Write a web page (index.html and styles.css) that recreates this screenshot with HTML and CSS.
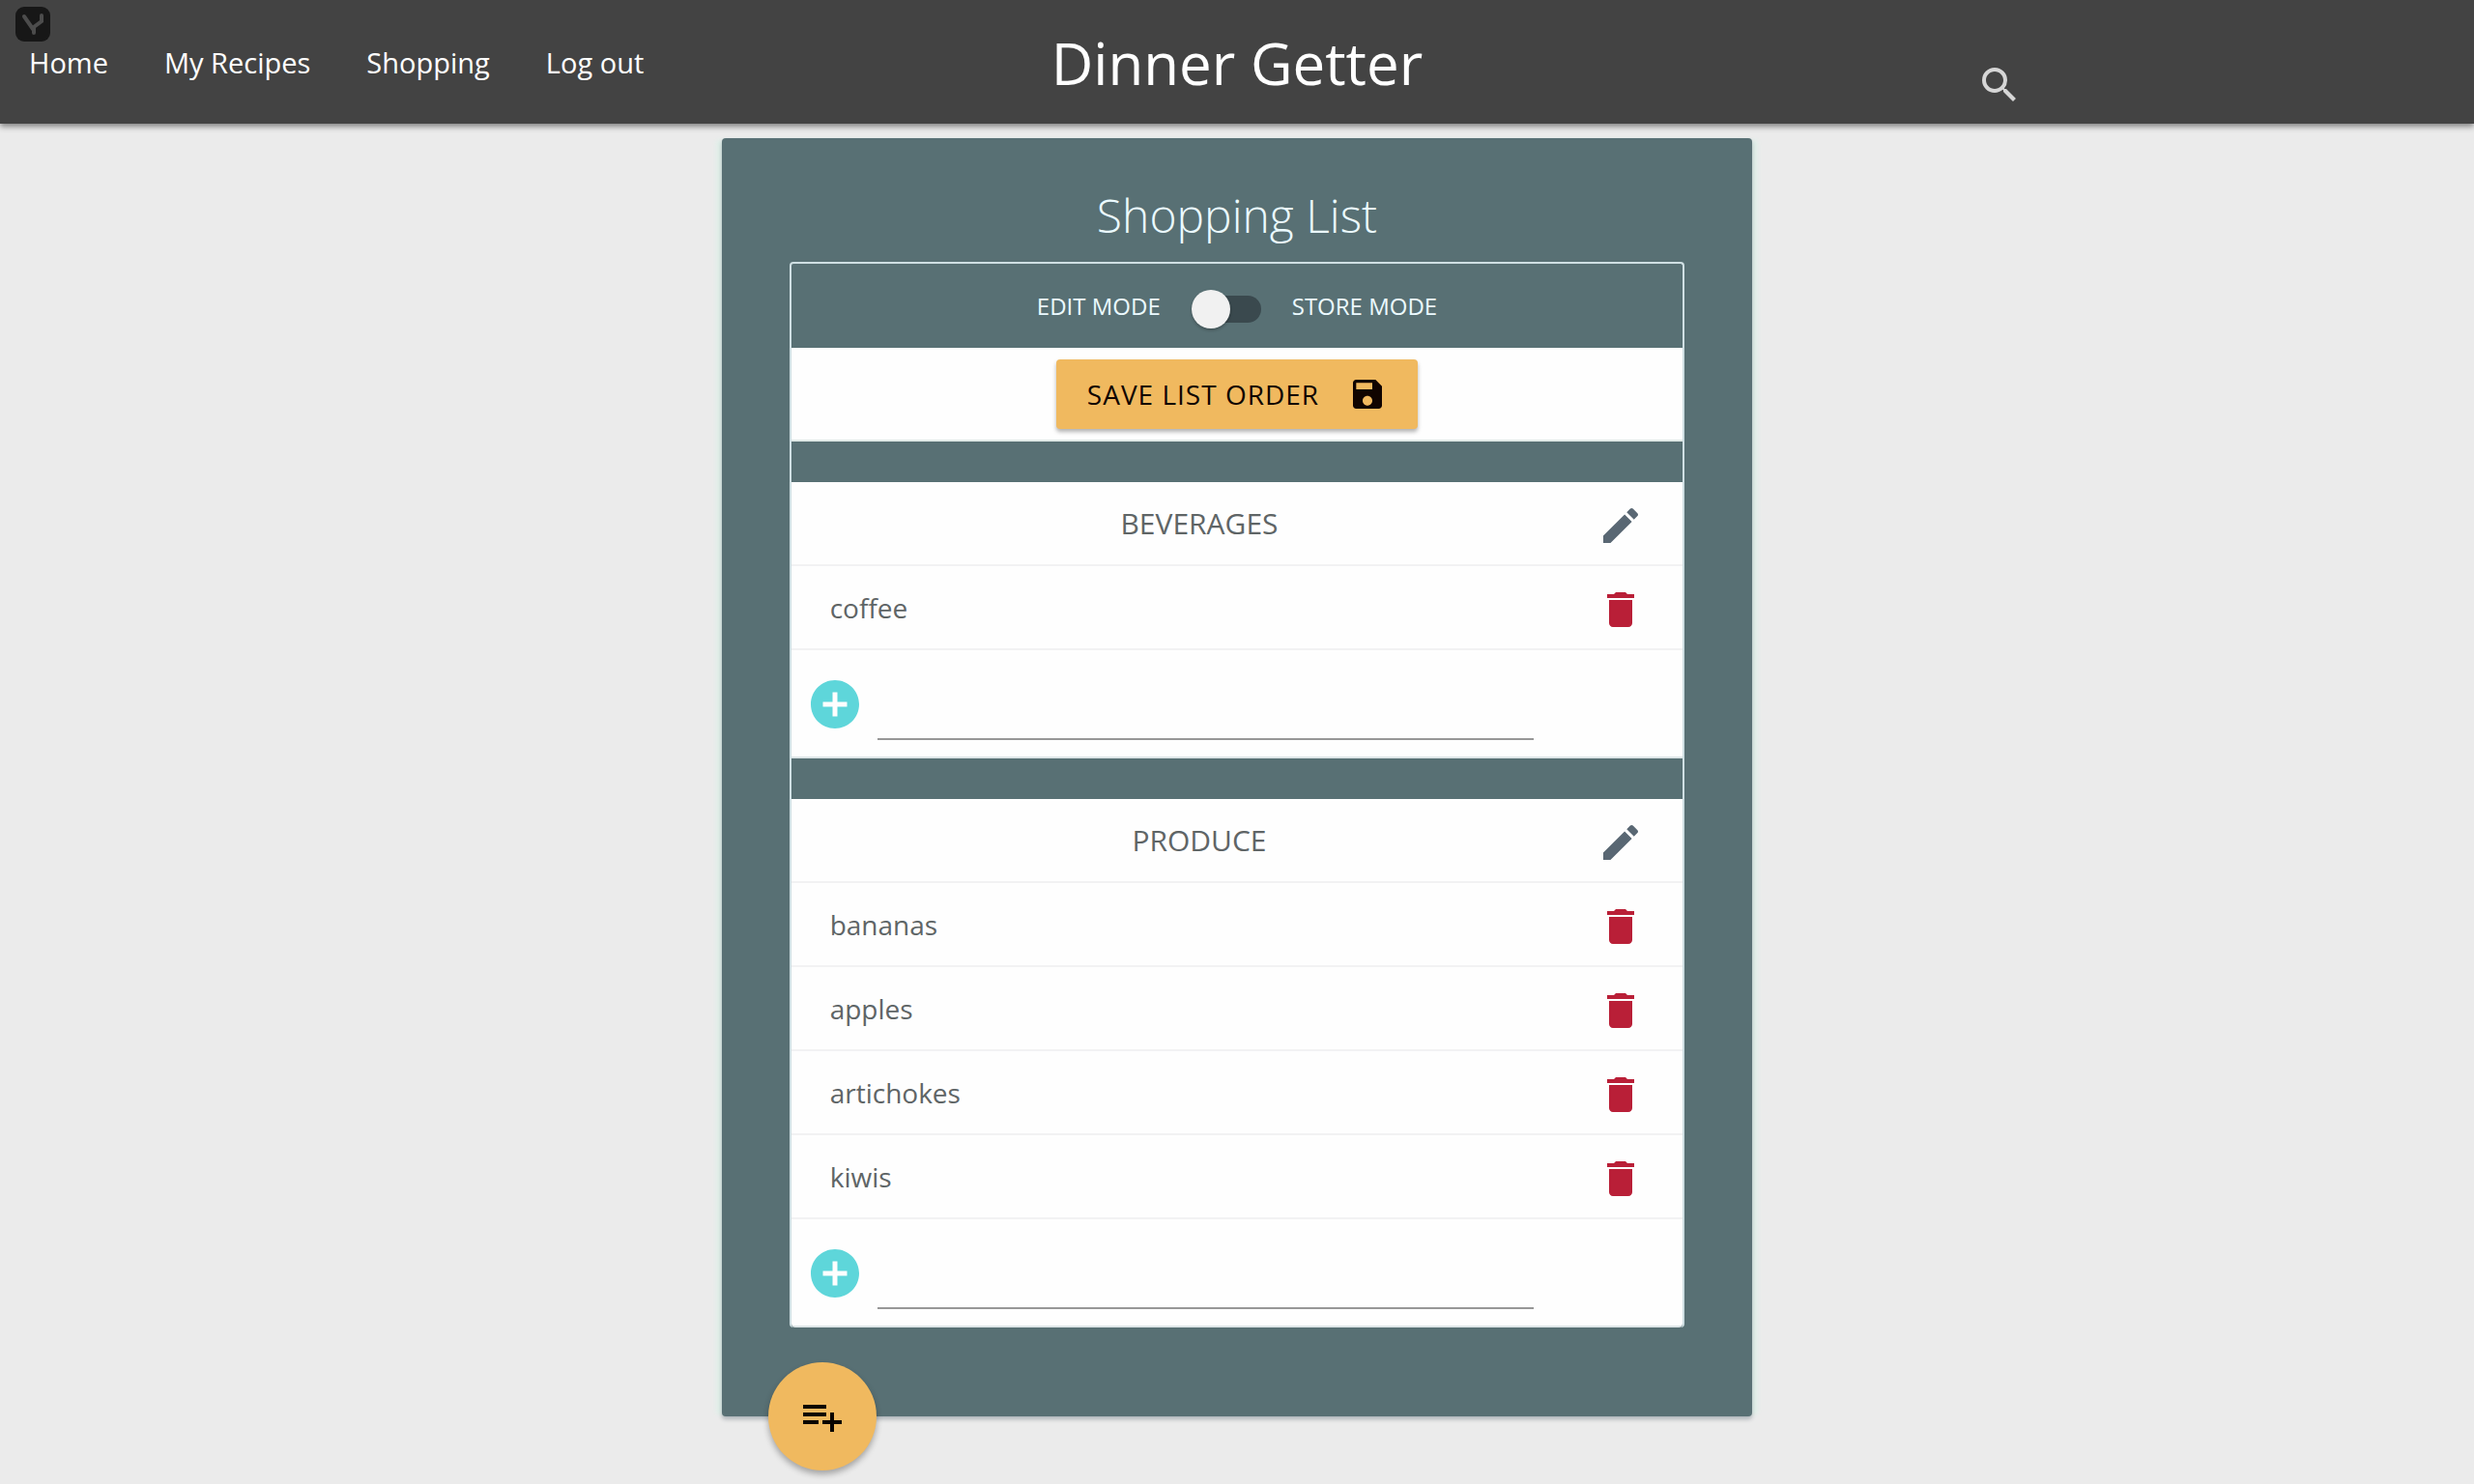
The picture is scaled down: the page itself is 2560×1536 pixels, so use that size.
FILE: index.html
```html
<!DOCTYPE html>
<html lang="en">
<head>
<meta charset="utf-8">
<meta name="viewport" content="width=device-width, initial-scale=1">
<title>Dinner Getter</title>
<link rel="stylesheet" href="styles.css">
</head>
<body>
<svg class="sprite" aria-hidden="true">
  <symbol id="edit" viewBox="0 0 24 24"><path d="M3 17.25V21h3.75L17.81 9.94l-3.75-3.75L3 17.25zM20.71 7.04c.39-.39.39-1.02 0-1.41l-2.34-2.34c-.39-.39-1.02-.39-1.41 0l-1.83 1.83 3.75 3.75 1.83-1.83z"/></symbol>
  <symbol id="delete" viewBox="0 0 24 24"><path d="M6 19c0 1.1.9 2 2 2h8c1.1 0 2-.9 2-2V7H6v12zM19 4h-3.5l-1-1h-5l-1 1H5v2h14V4z"/></symbol>
  <symbol id="add" viewBox="0 0 24 24"><path d="M12 2C6.48 2 2 6.48 2 12s4.480 10 10 10 10-4.480 10-10S17.520 2 12 2zm5 11h-4v4h-2v-4H7v-2h4V7h2v4h4v2z"/></symbol>
</svg>

<header class="topbar">
  <nav class="nav">
    <a href="#">Home</a>
    <a href="#">My Recipes</a>
    <a href="#">Shopping</a>
    <a href="#">Log out</a>
  </nav>
  <h1 class="brand">Dinner Getter</h1>
  <button class="icon-btn search" aria-label="Search">
    <svg viewBox="0 0 24 24"><path d="M15.5 14h-.79l-.28-.27A6.471 6.471 0 0 0 16 9.500 6.500 6.500 0 1 0 9.500 16c1.610 0 3.090-.59 4.230-1.570l.27.28v.79l5 4.990L20.490 19l-4.990-5zm-6 0C7.010 14 5 11.990 5 9.500S7.010 5 9.500 5 14 7.010 14 9.500 11.990 14 9.500 14z"/></svg>
  </button>
  <svg class="badge" viewBox="0 0 36 36" aria-hidden="true">
    <rect width="36" height="36" rx="9" fill="#171717"/>
    <path d="M9 10l9 13M27 9v6l-8 6v6" fill="none" stroke="#4c4c4c" stroke-width="4" stroke-linecap="round"/>
  </svg>
</header>

<main class="card">
  <h2 class="title">Shopping List</h2>
  <div class="collection">
    <div class="row mode">
      <span>EDIT MODE</span>
      <input class="switch" type="checkbox" role="switch" aria-label="Store mode">
      <span>STORE MODE</span>
    </div>
    <div class="row save">
      <button class="save-btn">SAVE LIST ORDER
        <svg viewBox="0 0 24 24"><path d="M17 3H5c-1.110 0-2 .9-2 2v14c0 1.100.89 2 2 2h14c1.100 0 2-.9 2-2V7l-4-4zm-5 16c-1.660 0-3-1.340-3-3s1.340-3 3-3 3 1.340 3 3-1.340 3-3 3zm3-10H5V5h10v4z"/></svg>
      </button>
    </div>
    <section class="group">
      <div class="row">
        <h3 class="heading">BEVERAGES</h3>
        <button class="icon-btn edit" aria-label="Edit beverages"><svg><use href="#edit"/></svg></button>
      </div>
      <ul class="items">
        <li class="row"><span class="name">coffee</span><button class="icon-btn delete" aria-label="Delete coffee"><svg><use href="#delete"/></svg></button></li>
      </ul>
      <form class="row add-row">
        <button class="icon-btn add" type="button" aria-label="Add to beverages"><svg><use href="#add"/></svg></button>
        <input class="field" type="text" aria-label="New beverage">
      </form>
    </section>
    <section class="group">
      <div class="row">
        <h3 class="heading">PRODUCE</h3>
        <button class="icon-btn edit" aria-label="Edit produce"><svg><use href="#edit"/></svg></button>
      </div>
      <ul class="items">
        <li class="row"><span class="name">bananas</span><button class="icon-btn delete" aria-label="Delete bananas"><svg><use href="#delete"/></svg></button></li>
        <li class="row"><span class="name">apples</span><button class="icon-btn delete" aria-label="Delete apples"><svg><use href="#delete"/></svg></button></li>
        <li class="row"><span class="name">artichokes</span><button class="icon-btn delete" aria-label="Delete artichokes"><svg><use href="#delete"/></svg></button></li>
        <li class="row"><span class="name">kiwis</span><button class="icon-btn delete" aria-label="Delete kiwis"><svg><use href="#delete"/></svg></button></li>
      </ul>
      <form class="row add-row">
        <button class="icon-btn add" type="button" aria-label="Add to produce"><svg><use href="#add"/></svg></button>
        <input class="field" type="text" aria-label="New produce">
      </form>
    </section>
  </div>
  <button class="fab" aria-label="Add category">
    <svg viewBox="0 0 24 24"><path d="M14 10H2v2h12v-2zm0-4H2v2h12V6zm4 8v-4h-2v4h-4v2h4v4h2v-4h4v-2h-4zM2 16h8v-2H2v2z"/></svg>
  </button>
</main>
</body>
</html>
```
FILE: styles.css
```css
* { box-sizing: border-box; }

body {
  margin: 0;
  background: #ebebeb;
  color: #5f6566;
  font: 400 28px/44px "Open Sans", "Noto Sans", sans-serif;
}

h1, h2, h3, ul { margin: 0; padding: 0; font-weight: 400; }
ul { list-style: none; }
svg { display: block; fill: currentColor; }
.sprite { display: none; }

button, input { font: inherit; color: inherit; }
button { border: 0; padding: 0; background: none; cursor: pointer; }

.icon-btn { flex: none; width: 48px; height: 48px; }
.icon-btn svg { width: 100%; height: 100%; }

/* Top bar */
.topbar {
  position: relative;
  display: grid;
  grid-template-columns: 1fr auto 1fr;
  align-items: center;
  height: 128px;
  background: #434343;
  color: #fff;
  box-shadow: 0 3px 6px rgba(0, 0, 0, .45);
}
.nav { display: flex; gap: 58px; padding: 2px 0 0 30px; font-size: 29px; }
.nav a { color: inherit; text-decoration: none; }
.brand { padding-top: 2px; font-size: 60px; line-height: 80px; }
.search {
  align-self: end;
  justify-self: end;
  margin: 0 467px 16px 0;
  color: #d6d6d6;
}
.badge { position: absolute; top: 7px; left: 16px; width: 36px; height: 36px; }

/* Card */
.card {
  position: relative;
  width: calc(100% * 5 / 12);
  margin: 15px auto 70px;
  padding: 49px 70px 92px;
  border-radius: 4px;
  background: #587074;
  box-shadow:
    0 3px 4px rgba(60, 75, 90, .35),
    8px 0 4px -2px #e0efe9,
    -8px 0 4px -2px #e0efe9;
}
.title {
  margin-bottom: 17px;
  color: #ebfaff;
  font-size: 48px;
  font-weight: 300;
  line-height: 62px;
  text-align: center;
}

.collection { border: 2px solid #cfdfe3; border-bottom-width: 0; border-radius: 4px; }
.row {
  display: flex;
  align-items: center;
  height: 87px;
  padding: 0 40px;
  border-bottom: 2px solid #f2f2f3;
  background: #fefefe;
}
.mode {
  justify-content: center;
  gap: 32px;
  border-bottom: 0;
  background: none;
  color: #ebfaff;
  font-size: 24px;
}
.switch {
  appearance: none;
  display: flex;
  align-items: center;
  width: 72px;
  height: 28px;
  margin: 6px 0 0;
  border-radius: 14px;
  background: #3a494e;
  cursor: pointer;
}
.switch::before {
  content: "";
  width: 40px;
  height: 40px;
  border-radius: 50%;
  background: #f1f1f1;
  box-shadow: 0 2px 3px rgba(0, 0, 0, .25);
}
.switch:checked { justify-content: flex-end; }

.save { justify-content: center; height: 97px; border-color: #dfe9e6; }
.save-btn {
  display: flex;
  align-items: center;
  gap: 30px;
  height: 72px;
  padding: 0 32px;
  border-radius: 4px;
  background: #f0b95f;
  box-shadow: 0 3px 4px rgba(0, 0, 0, .3);
  color: #100400;
  letter-spacing: 1px;
}
.save-btn svg { width: 40px; height: 40px; }

.group { margin-top: 42px; }
.heading { flex: 1; margin-right: 30px; font-size: 30px; text-align: center; }
.name { flex: 1; }
.edit, .delete { padding-top: 2px; }
.edit { color: #596773; }
.delete { color: #b91f37; }
.edit svg, .delete svg { height: 48px; }

.add-row {
  gap: 14px;
  height: 112px;
  padding: 2px 154px 0 15px;
  border-color: #dde5e7;
}
.add { width: 60px; height: 60px; color: #5ed6da; }
.field {
  flex: 1;
  align-self: flex-start;
  min-width: 0;
  height: 91px;
  padding: 0;
  border: 0;
  border-bottom: 2px solid #979797;
  outline: 0;
  background: none;
}
.group:last-child .add-row { border-radius: 0 0 4px 4px; }

.fab {
  position: absolute;
  bottom: -56px;
  left: 48px;
  display: grid;
  place-items: center;
  width: 112px;
  height: 112px;
  border-radius: 50%;
  background: #f0b95f;
  box-shadow: 0 4px 6px rgba(0, 0, 0, .3);
  color: #0a0400;
}
.fab svg { width: 48px; height: 48px; }
```
